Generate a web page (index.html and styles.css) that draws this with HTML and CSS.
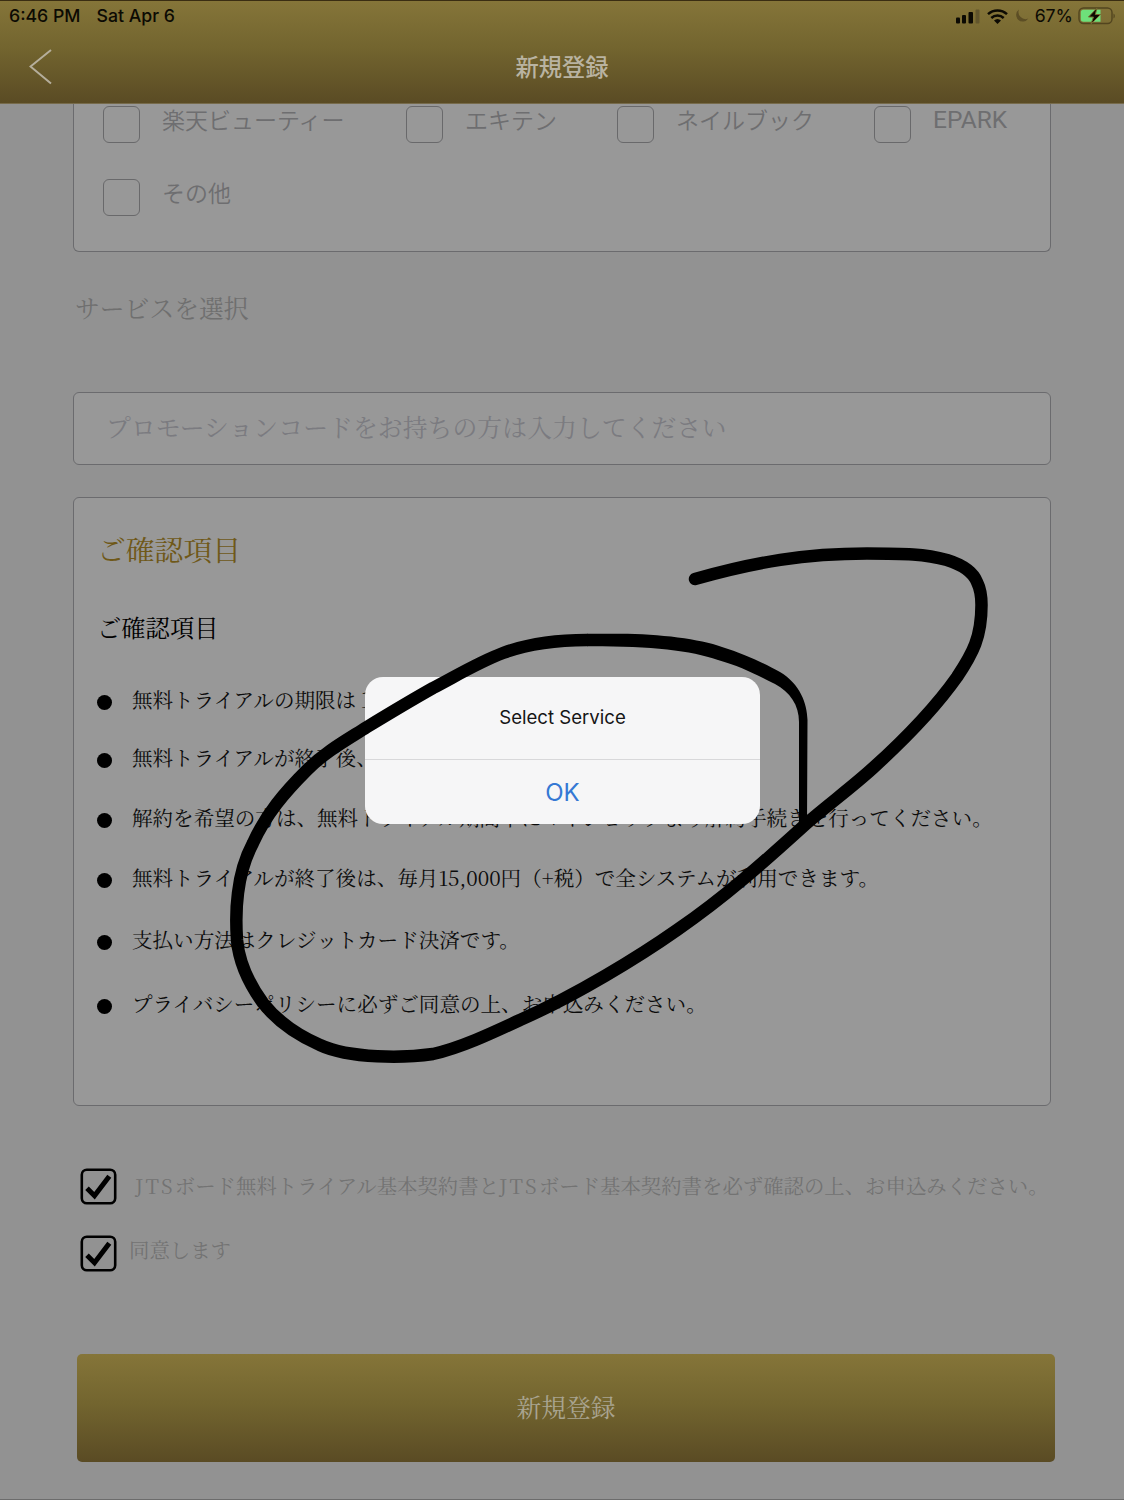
FILE: index.html
```html
<!DOCTYPE html>
<html lang="ja">
<head>
<meta charset="utf-8">
<title>新規登録</title>
<link rel="stylesheet" href="styles.css">
</head>
<body>
<div class="screen">
  <header class="header">
    <div class="status">
      <span class="time">6:46 PM</span>
      <span class="date">Sat Apr 6</span>
      <svg class="status-icons" width="76" height="20" viewBox="0 0 76 20">
        <g fill="#0c0a03">
          <rect x="1" y="11.500" width="4" height="6" rx="1"/>
          <rect x="7" y="9" width="4" height="8.500" rx="1"/>
          <rect x="13.500" y="6" width="4.500" height="11.500" rx="1"/>
        </g>
        <rect x="20.500" y="3.500" width="4" height="14" rx="1" fill="#62562d"/>
        <g fill="none" stroke="#0c0a03" stroke-width="2.500">
          <path d="M33 8.200a14 14 0 0 1 19 0"/>
          <path d="M36.300 12a9 9 0 0 1 12.400 0"/>
        </g>
        <path d="M39 14.500a5.300 5.300 0 0 1 7 0L42.500 18Z" fill="#0c0a03"/>
        <path d="M64 3.500A6.600 6.600 0 1 0 73.300 12.500A7 7 0 0 1 64 3.500Z" fill="#5c4e25"/>
      </svg>
      <span class="percent">67%</span>
      <svg class="battery" width="38" height="18" viewBox="0 0 38 18">
        <rect x="1" y="1" width="33" height="15.500" rx="4.500" fill="none" stroke="#52451f" stroke-width="1.400"/>
        <path d="M5.500 2.800H22.500V14.800H5.500A2.700 2.700 0 0 1 2.800 12V5.500A2.700 2.700 0 0 1 5.500 2.800Z" fill="#6ee07a"/>
        <path d="M35.500 6.500a3 3 0 0 1 0 5Z" fill="#52451f"/>
        <path d="M19 1L10.500 10H15.500L13 17L22.500 7.500H17.300Z" fill="#0c0a03" stroke="#75672f" stroke-width="1"/>
      </svg>
    </div>
    <div class="nav">
      <svg class="back" width="24" height="36" viewBox="0 0 24 36"><path d="M22 1L1.500 17.500L22 34.500" fill="none" stroke="#b5ae9c" stroke-width="2"/></svg>
      <h1>新規登録</h1>
    </div>
  </header>

  <main class="form">
    <section class="sites">
      <div class="site-row">
        <label class="site s1"><i class="box"></i><span>楽天ビューティー</span></label>
        <label class="site s2"><i class="box"></i><span>エキテン</span></label>
        <label class="site s3"><i class="box"></i><span>ネイルブック</span></label>
        <label class="site s4"><i class="box"></i><span class="latin">EPARK</span></label>
      </div>
      <div class="site-row">
        <label class="site s1"><i class="box"></i><span>その他</span></label>
      </div>
    </section>
    <div class="service">サービスを選択</div>
    <div class="promo">プロモーションコードをお持ちの方は入力してください</div>
    <section class="confirm">
      <h2>ご確認項目</h2>
      <h3>ご確認項目</h3>
      <ul>
        <li>無料トライアルの期限は１ヶ月です。</li>
        <li>無料トライアルが終了後、</li>
        <li>解約を希望の方は、無料トライアル期間中にマイショップより解約手続きを行ってください。</li>
        <li>無料トライアルが終了後は、毎月15,000円（+税）で全システムが利用できます。</li>
        <li>支払い方法はクレジットカード決済です。</li>
        <li>プライバシーポリシーに必ずご同意の上、お申込みください。</li>
      </ul>
    </section>
    <div class="agree">
      <svg width="37" height="37" viewBox="0 0 37 37"><rect x="1.800" y="1.800" width="33.400" height="33.400" rx="5" fill="none" stroke="#000" stroke-width="2.600"/><path d="M7 20.300L14.500 27.700L29.300 8.300" fill="none" stroke="#000" stroke-width="5"/></svg>
      <div><span class="jts">JTS</span>ボード無料トライアル基本契約書と<span class="jts">JTS</span>ボード基本契約書を必ず確認の上、お申込みください。</div>
    </div>
    <div class="agree second">
      <svg width="37" height="37" viewBox="0 0 37 37"><rect x="1.800" y="1.800" width="33.400" height="33.400" rx="5" fill="none" stroke="#000" stroke-width="2.600"/><path d="M7 20.300L14.500 27.700L29.300 8.300" fill="none" stroke="#000" stroke-width="5"/></svg>
      <div>同意します</div>
    </div>
    <div class="submit">新規登録</div>
  </main>

  <div class="alert">
    <div class="message">Select Service</div>
    <div class="ok">OK</div>
  </div>

  <svg class="ink" width="1124" height="1500" viewBox="0 0 1124 1500">
    <path fill="none" stroke="#000" stroke-width="12.500" stroke-linecap="round" stroke-linejoin="round" d="M695 579C755 562 805 553.500 867 553.500C905 553.500 925 554 947 560C963 565 973 572 977 582C981 590 981.500 597 981.500 605C981.500 637 973 653 957 677C933 711 905 739 873 768C851 788 830 803 807 823C764 862 725 897 677 930C640 956 575 996 520 1020C490 1034 460 1048 433 1054C405 1058 350 1059 320 1045C297 1035 278 1022 263 1003C247 981 239 962 237 940C236 925 236 908 238 893C240 876 244 860 253 843C266 814 285 792 307 770C325 752 345 741 367 727C390 713 410 701 433 688C456 676 479 662 503 653C530 643 557 640 587 640"/>
    <path d="M587 633.800H620C660 634 700 639 722 647C745 654 765 664 780 672C800 684 807 703 807.500 720L807 824L799 824V722C799 705 790 692 775 684C755 674 740 666 718 660C690 650 650 646 587 646.200Z"/>
  </svg>
</div>
</body>
</html>
```
FILE: styles.css
```css
* { box-sizing: border-box; }

body {
  margin: 0;
  background: #929292;
  font-family: "Noto Serif CJK JP", "Noto Serif JP", "Noto Sans CJK JP", serif;
}

h1, h2, h3, ul { margin: 0; padding: 0; font-weight: 400; }

.screen {
  position: relative;
  width: 1124px;
  height: 1500px;
  overflow: hidden;
  border-bottom: 1px solid #6c6c6c;
}

.header {
  height: 104px;
  border-top: 1px solid #3a2d12;
  border-bottom: 1px solid #776b4b;
  background: linear-gradient(#857539, #73652f 45%, #5a4b24);
}

.status {
  display: flex;
  align-items: center;
  height: 29px;
  padding: 0 8px 0 9px;
  font: 500 17.700px/28px Inter, sans-serif;
  color: #0c0a03;
}
.date { margin-left: 16px; }
.status-icons { margin-left: auto; margin-right: 4px; }
.percent { font-weight: 400; }
.battery { margin-left: 5px; }

.nav {
  display: grid;
  grid-template-columns: 110px 1fr 110px;
  align-items: center;
  height: 73px;
}
.back { margin: 0 0 0 29px; }
.nav h1 {
  padding-bottom: 2px;
  text-align: center;
  font: 500 23.300px/32px "Noto Sans CJK JP", sans-serif;
  color: #b9b3a1;
}

.form { padding: 0 73px; }

.sites {
  height: 148px;
  border: 1px solid #6b6b6e;
  border-top: 0;
  border-radius: 0 0 6px 6px;
  background: #989898;
}
.site-row {
  display: flex;
  height: 73px;
  padding-left: 29px;
}
.site {
  display: flex;
  gap: 22px;
  padding-top: 2px;
  font: 350 23px/26px "Noto Sans CJK JP", sans-serif;
  color: #6e6e70;
}
.s1 { width: 303px; }
.s2 { width: 211px; }
.s3 { width: 257px; }
.latin { font-family: Roboto, sans-serif; font-weight: 400; font-size: 24.500px; line-height: 28px; }
.box {
  width: 37px;
  height: 37px;
  border: 1.500px solid #69696b;
  border-radius: 6px;
}

.service {
  height: 140px;
  padding: 38px 0 0 2px;
  font-size: 24.800px;
  line-height: 34px;
  color: #6f6f6f;
}

.promo {
  height: 73px;
  padding-left: 32px;
  border: 1px solid #6b6b6e;
  border-radius: 6px;
  background: #989898;
  font-size: 24.900px;
  line-height: 66px;
  white-space: nowrap;
  color: #7b7b80;
}

.confirm {
  height: 609px;
  margin-top: 32px;
  padding: 31px 23px 0;
  border: 1px solid #6b6b6e;
  border-radius: 6px;
  background: #989898;
}
.confirm h2 { font-size: 28.800px; line-height: 40px; color: #6f5819; }
.confirm h3 { margin-top: 41px; font-size: 24.300px; line-height: 34px; color: #000; }
.confirm ul {
  display: grid;
  grid-template-rows: 58px 60px 60px 62px 64px 60px;
  margin-top: 41px;
  list-style: none;
}
.confirm li {
  display: flex;
  gap: 20px;
  font-size: 20.570px;
  line-height: 29px;
  white-space: nowrap;
  color: #0b0b0b;
}
.confirm li::before {
  content: "";
  width: 15px;
  height: 15px;
  margin-top: 9.500px;
  border-radius: 50%;
  background: #000;
}

.agree {
  display: flex;
  gap: 18px;
  height: 67px;
  margin-top: 62px;
  padding-left: 7px;
  font-size: 20.400px;
  line-height: 36px;
  white-space: nowrap;
  color: #737373;
}
.agree.second { gap: 12px; height: 119px; margin-top: 0; line-height: 30px; }
.jts { font-family: "Noto Serif CJK JP", serif; letter-spacing: 2.200px; }

.submit {
  width: 978px;
  height: 108px;
  margin-left: 4px;
  border-radius: 5px;
  background: linear-gradient(#857539, #73652f 45%, #5a4b24);
  text-align: center;
  font-size: 24.800px;
  line-height: 104px;
  color: #a9a490;
}

.alert {
  position: absolute;
  left: 365px;
  top: 677px;
  width: 395px;
  height: 147px;
  border-radius: 18px;
  background: #f6f6f7;
  text-align: center;
  font-family: Inter, sans-serif;
}
.message {
  height: 83px;
  border-bottom: 1px solid #d8d8da;
  font-size: 18.600px;
  line-height: 80px;
  color: #151515;
}
.ok { font-size: 24px; line-height: 65px; color: #3478d4; }

.ink { position: absolute; inset: 0; }
```
